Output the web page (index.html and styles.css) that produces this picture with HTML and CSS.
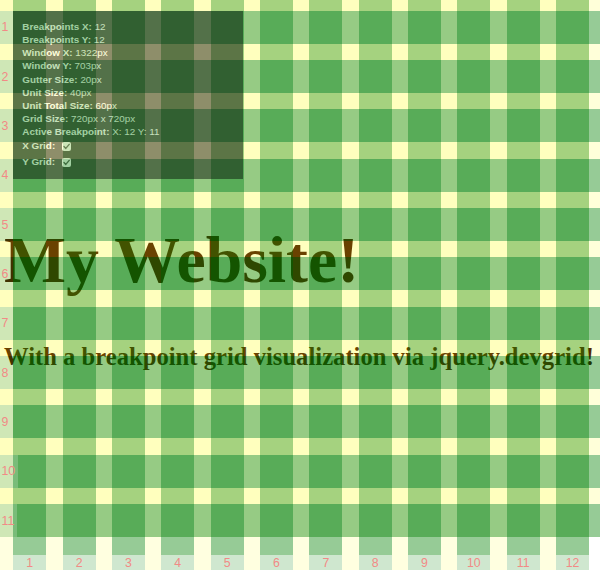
FILE: index.html
```html
<!DOCTYPE html>
<html>
<head>
<meta charset="utf-8">
<title>My Website!</title>
<link rel="stylesheet" href="styles.css">
</head>
<body>
<main class="page">
  <h1 class="title">My Website!</h1>
  <h2 class="subtitle">With a breakpoint grid visualization via jquery.devgrid!</h2>
</main>

<div class="grid-overlay">
  <div class="cols">
    <div class="col"><div class="col-gutter"></div><div class="col-unit"><div class="col-body"></div><div class="col-label">1</div></div></div>
    <div class="col"><div class="col-gutter"></div><div class="col-unit"><div class="col-body"></div><div class="col-label">2</div></div></div>
    <div class="col"><div class="col-gutter"></div><div class="col-unit"><div class="col-body"></div><div class="col-label">3</div></div></div>
    <div class="col"><div class="col-gutter"></div><div class="col-unit"><div class="col-body"></div><div class="col-label">4</div></div></div>
    <div class="col"><div class="col-gutter"></div><div class="col-unit"><div class="col-body"></div><div class="col-label">5</div></div></div>
    <div class="col"><div class="col-gutter"></div><div class="col-unit"><div class="col-body"></div><div class="col-label">6</div></div></div>
    <div class="col"><div class="col-gutter"></div><div class="col-unit"><div class="col-body"></div><div class="col-label">7</div></div></div>
    <div class="col"><div class="col-gutter"></div><div class="col-unit"><div class="col-body"></div><div class="col-label">8</div></div></div>
    <div class="col"><div class="col-gutter"></div><div class="col-unit"><div class="col-body"></div><div class="col-label">9</div></div></div>
    <div class="col"><div class="col-gutter"></div><div class="col-unit"><div class="col-body"></div><div class="col-label">10</div></div></div>
    <div class="col"><div class="col-gutter"></div><div class="col-unit"><div class="col-body"></div><div class="col-label">11</div></div></div>
    <div class="col"><div class="col-gutter"></div><div class="col-unit"><div class="col-body"></div><div class="col-label">12</div></div></div>
  </div>
  <div class="rows">
    <div class="row-gutter"></div><div class="row"><span class="row-label">1</span><span class="row-fill"></span></div>
    <div class="row-gutter"></div><div class="row"><span class="row-label">2</span><span class="row-fill"></span></div>
    <div class="row-gutter"></div><div class="row"><span class="row-label">3</span><span class="row-fill"></span></div>
    <div class="row-gutter"></div><div class="row"><span class="row-label">4</span><span class="row-fill"></span></div>
    <div class="row-gutter"></div><div class="row"><span class="row-label">5</span><span class="row-fill"></span></div>
    <div class="row-gutter"></div><div class="row"><span class="row-label">6</span><span class="row-fill"></span></div>
    <div class="row-gutter"></div><div class="row"><span class="row-label">7</span><span class="row-fill"></span></div>
    <div class="row-gutter"></div><div class="row"><span class="row-label">8</span><span class="row-fill"></span></div>
    <div class="row-gutter"></div><div class="row"><span class="row-label">9</span><span class="row-fill"></span></div>
    <div class="row-gutter"></div><div class="row"><span class="row-label">10</span><span class="row-fill"></span></div>
    <div class="row-gutter"></div><div class="row"><span class="row-label">11</span><span class="row-fill"></span></div>
  </div>
</div>

<div class="info-panel">
  <div class="info-line"><b>Breakpoints X:</b> 12</div>
  <div class="info-line"><b>Breakpoints Y:</b> 12</div>
  <div class="info-line"><b>Window X:</b> 1322px</div>
  <div class="info-line"><b>Window Y:</b> 703px</div>
  <div class="info-line"><b>Gutter Size:</b> 20px</div>
  <div class="info-line"><b>Unit Size:</b> 40px</div>
  <div class="info-line"><b>Unit Total Size:</b> 60px</div>
  <div class="info-line"><b>Grid Size:</b> 720px x 720px</div>
  <div class="info-line"><b>Active Breakpoint:</b> X: 12 Y: 11</div>
  <div class="info-toggle"><b>X Grid:</b><span class="check"><svg viewBox="0 0 9 9" width="9" height="9"><path d="M2 4.6 L3.8 6.4 L7.2 2.4" fill="none" stroke="#222" stroke-width="1.4" stroke-linecap="round" stroke-linejoin="round"/></svg></span></div>
  <div class="info-toggle"><b>Y Grid:</b><span class="check"><svg viewBox="0 0 9 9" width="9" height="9"><path d="M2 4.6 L3.8 6.4 L7.2 2.4" fill="none" stroke="#222" stroke-width="1.4" stroke-linecap="round" stroke-linejoin="round"/></svg></span></div>
</div>
</body>
</html>
```
FILE: styles.css
```css
html, body {
  margin: 0;
  padding: 0;
  background: #fff;
  width: 600px;
  height: 570px;
  overflow: hidden;
}

body {
  position: relative;
}

.page {
  padding: 226.6px 0 0 4px;
  color: #3a0300;
  font-family: "Liberation Serif", "Times New Roman", serif;
}

.title {
  margin: 0;
  font-size: 65.8px;
  line-height: 1;
  font-weight: bold;
  white-space: nowrap;
}

.subtitle {
  margin: 53.1px 0 0;
  font-size: 24.65px;
  line-height: 1;
  font-weight: bold;
  white-space: nowrap;
}

/* grid overlay */
.grid-overlay {
  position: absolute;
  left: 0;
  top: 0;
  width: 600px;
  height: 570px;
  overflow: hidden;
  pointer-events: none;
  font-family: "Liberation Sans", Arial, sans-serif;
}

.cols {
  position: absolute;
  left: -3.15px;
  top: 0;
  display: flex;
}

.col {
  display: flex;
  width: 49.35px;
}

.col-gutter {
  width: 16.45px;
  height: 572px;
  background: rgba(255, 255, 0, 0.12);
}

.col-unit {
  width: 32.9px;
  display: flex;
  flex-direction: column;
}

.col-body {
  height: 555px;
  background: rgba(0, 128, 0, 0.41);
}

.col-label {
  height: 16.45px;
  line-height: 16.45px;
  text-align: center;
  font-size: 12.3px;
  color: #f28a86;
  background: rgba(0, 128, 0, 0.19);
}

.rows {
  position: absolute;
  left: 0;
  right: 0;
  top: -5.65px;
  display: flex;
  flex-direction: column;
}

.row-gutter {
  height: 16.45px;
  background: rgba(255, 255, 0, 0.15);
}

.row {
  height: 32.9px;
  display: flex;
}

.row-label {
  min-width: 13.3px;
  box-sizing: border-box;
  padding: 0 3px 0 1.5px;
  display: flex;
  align-items: center;
  font-size: 12.3px;
  color: #f28a86;
  background: rgba(0, 128, 0, 0.19);
}

.row-fill {
  flex: 1;
  background: rgba(0, 128, 0, 0.41);
}

/* info panel */
.info-panel {
  position: absolute;
  left: 13.3px;
  top: 11px;
  width: 230px;
  box-sizing: border-box;
  padding: 9px;
  background: #000;
  color: #fff;
  opacity: 0.44;
  font-family: "Liberation Sans", Arial, sans-serif;
  font-size: 9.87px;
  line-height: 13.16px;
}

.info-line {
  white-space: nowrap;
}

.info-toggle {
  height: 16px;
  line-height: 16px;
  display: flex;
  align-items: center;
}

.check {
  display: inline-flex;
  width: 9px;
  height: 9px;
  margin-left: 7px;
  box-sizing: border-box;
  background: #fff;
  border-radius: 2px;
}

.check svg {
  display: block;
}
```
